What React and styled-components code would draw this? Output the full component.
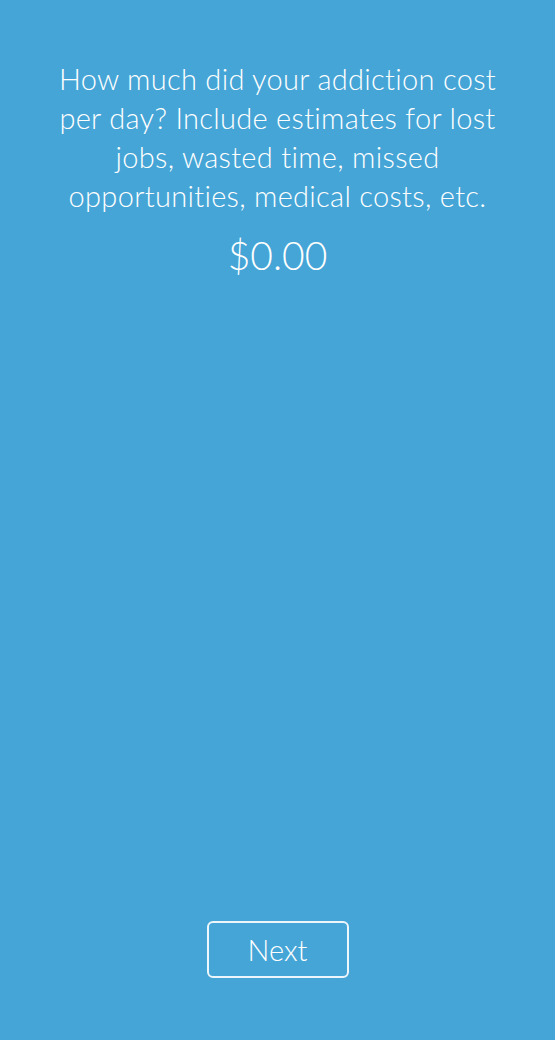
import React from "react";
import styled, { createGlobalStyle } from "styled-components";

const Global = createGlobalStyle`
  html, body { margin: 0; padding: 0; background: #45a5d6; }
  body { font-family: Lato, "Open Sans", sans-serif; }
`;

const Screen = styled.div`
  width: 555px;
  height: 1040px;
  background: #45a5d6;
  display: flex;
  flex-direction: column;
  align-items: center;
  box-sizing: border-box;
  padding-top: 59px;
  color: #ffffff;
`;

const Question = styled.p`
  margin: 0;
  width: 450px;
  text-align: center;
  font-size: 29px;
  font-weight: 300;
  line-height: 39px;
  letter-spacing: 0.3px;
`;

const Amount = styled.div`
  margin-top: 16px;
  font-size: 39px;
  font-weight: 300;
  line-height: 48px;
`;

const Spacer = styled.div`
  flex: 1;
`;

const NextButton = styled.button`
  width: 142px;
  height: 57px;
  margin-bottom: 62px;
  background: transparent;
  border: 2px solid rgba(255, 255, 255, 0.9);
  border-radius: 6px;
  color: #ffffff;
  font-family: Lato, sans-serif;
  font-size: 29px;
  font-weight: 300;
  cursor: pointer;
  padding: 0;
`;

export default function App() {
  return (
    <>
      <Global />
      <Screen>
        <Question>
          How much did your addiction cost per day? Include estimates for lost
          jobs, wasted time, missed opportunities, medical costs, etc.
        </Question>
        <Amount>$0.00</Amount>
        <Spacer />
        <NextButton>Next</NextButton>
      </Screen>
    </>
  );
}
